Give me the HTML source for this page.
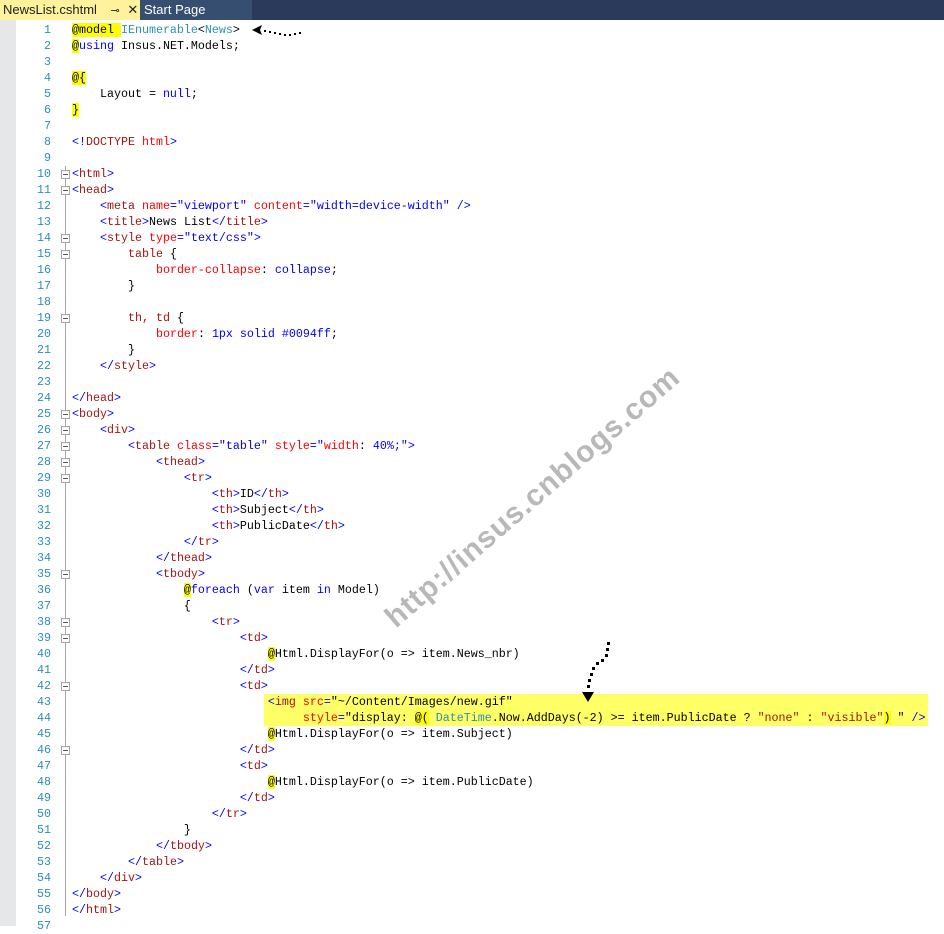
<!DOCTYPE html>
<html><head><meta charset="utf-8"><style>
body{margin:0;width:944px;height:926px;background:#fff;position:relative;overflow:hidden;font-family:"Liberation Mono",monospace}
.tabs{position:absolute;left:0;top:0;width:944px;height:20px;background:#2b3a5a}
.t1{position:absolute;left:0;top:0;width:140px;height:20px;background:#fff29d;font:13px "Liberation Sans",sans-serif;color:#1e1e1e;line-height:20px;padding-left:3px;box-sizing:border-box}
.t2{position:absolute;left:140px;top:0;width:112px;height:20px;background:#364e6f;font:13px "Liberation Sans",sans-serif;color:#fff;line-height:20px;padding-left:4px;box-sizing:border-box}
.gut{position:absolute;left:0;top:20px;width:16px;height:906px;background:#e6e7e8}
.ln{position:absolute;left:16px;width:35px;text-align:right;color:#2b91af;font-size:11.67px;line-height:16px}
.c{position:absolute;left:72px;white-space:pre;font-size:11.67px;line-height:16px;color:#000}
.hl{position:absolute;left:264px;top:694px;width:664px;height:32px;background:#ffff66}
.vl{position:absolute;left:65px;top:166px;width:1px;height:750px;background:#a5a5a5}
.fb{position:absolute;left:61px;width:7px;height:7px;border:1px solid #a5a5a5;background:#fff}
.fb:after{content:"";position:absolute;left:1px;top:3px;width:5px;height:1px;background:#555}
.b{color:#0000ff}.m{color:#a31515}.r{color:#ff0000}.y{background:#ffff00}.k{color:#0000ff}.tp{color:#2b91af}.s{color:#a31515}
.wm{position:absolute;left:390px;top:605px;font:bold 30px "Liberation Sans",sans-serif;color:#b8b8b8;transform:rotate(-41deg);transform-origin:left center;white-space:nowrap;letter-spacing:1px}
</style></head><body>
<div class="tabs"><div class="t1">NewsList.cshtml <span style="margin-left:10px;font-size:11px">⊸</span> <span style="margin-left:4px">✕</span></div><div class="t2">Start Page</div></div>
<div class="gut"></div>
<div class="hl"></div>
<div class="vl"></div>
<div id="ln"></div>
<div id="code"></div>
<div class="wm">http://insus.cnblogs.com</div>
<svg style="position:absolute;left:250px;top:22px" width="60" height="20"><polygon points="2,8 12,3 10,8 12,13" fill="#000"/><g fill="#000"><rect x="14" y="8" width="2" height="2"/><rect x="19" y="9" width="2" height="2"/><rect x="24" y="10" width="2" height="2"/><rect x="29" y="11" width="2" height="2"/><rect x="34" y="12" width="2" height="2"/><rect x="39" y="12" width="2" height="2"/><rect x="44" y="11" width="2" height="2"/><rect x="49" y="10" width="2" height="2"/></g></svg>
<svg style="position:absolute;left:578px;top:640px" width="40" height="64"><g fill="#000"><rect x="29" y="2" width="3" height="3"/><rect x="28" y="8" width="3" height="3"/><rect x="27" y="14" width="3" height="3"/><rect x="23" y="19" width="3" height="3"/><rect x="18" y="22" width="3" height="3"/><rect x="14" y="27" width="3" height="3"/><rect x="12" y="33" width="3" height="3"/><rect x="10" y="39" width="3" height="3"/><rect x="9" y="45" width="3" height="3"/></g><polygon points="4,52 16,52 10,62" fill="#000"/></svg>
<script>
const L=[
'<span class="y">@model </span><span class="tp">IEnumerable</span>&lt;<span class="tp">News</span>&gt;',
'<span class="y">@</span><span class="k">using</span> Insus.NET.Models;',
'',
'<span class="y">@{</span>',
'    Layout = <span class="k">null</span>;',
'<span class="y">}</span>',
'',
'<span class="b">&lt;!</span><span class="m">DOCTYPE</span> <span class="r">html</span><span class="b">&gt;</span>',
'',
'T<html>',
'T<head>',
'    <span class="b">&lt;</span><span class="m">meta</span> <span class="r">name</span><span class="b">="viewport"</span> <span class="r">content</span><span class="b">="width=device-width"</span> <span class="b">/&gt;</span>',
'    <span class="b">&lt;</span><span class="m">title</span><span class="b">&gt;</span>News List<span class="b">&lt;/</span><span class="m">title</span><span class="b">&gt;</span>',
'    <span class="b">&lt;</span><span class="m">style</span> <span class="r">type</span><span class="b">="text/css"</span><span class="b">&gt;</span>',
'        <span class="m">table</span> {',
'            <span class="r">border-collapse</span>: <span class="b">collapse</span>;',
'        }',
'',
'        <span class="m">th, td</span> {',
'            <span class="r">border</span>: <span class="b">1px solid #0094ff</span>;',
'        }',
'    T</style>',
'',
'T</head>',
'T<body>',
'    T<div>',
'        <span class="b">&lt;</span><span class="m">table</span> <span class="r">class</span><span class="b">="table"</span> <span class="r">style</span><span class="b">="</span><span class="r">width</span>: <span class="b">40%;"&gt;</span>',
'            T<thead>',
'                T<tr>',
'                    T<th>IDT</th>',
'                    T<th>SubjectT</th>',
'                    T<th>PublicDateT</th>',
'                T</tr>',
'            T</thead>',
'            T<tbody>',
'                <span class="y">@</span><span class="k">foreach</span> (<span class="k">var</span> item <span class="k">in</span> Model)',
'                {',
'                    T<tr>',
'                        T<td>',
'                            <span class="y">@</span>Html.DisplayFor(o =&gt; item.News_nbr)',
'                        T</td>',
'                        T<td>',
'                            <span class="b">&lt;</span><span class="m">img</span> <span class="r">src</span><span class="b">=</span>"~/Content/Images/new.gif"',
'                                 <span class="r">style</span><span class="b">=</span>"display: <span class="y">@(</span> <span class="tp">DateTime</span>.Now.AddDays(-2) &gt;= item.PublicDate ? <span class="s">"none"</span> : <span class="s">"visible"</span><span class="y">)</span> " <span class="b">/&gt;</span>',
'                            <span class="y">@</span>Html.DisplayFor(o =&gt; item.Subject)',
'                        T</td>',
'                        T<td>',
'                            <span class="y">@</span>Html.DisplayFor(o =&gt; item.PublicDate)',
'                        T</td>',
'                    T</tr>',
'                }',
'            T</tbody>',
'        T</table>',
'    T</div>',
'T</body>',
'T</html>'];
const folds=[10,11,14,15,19,25,26,27,28,29,35,38,39,42,46];
let h='',n='';
function tag(s){return s.replace(/T<(\/?)([a-z]+)>/g,(m,sl,t)=>'<span class="b">&lt;'+sl+'</span><span class="m">'+t+'</span><span class="b">&gt;</span>');}
L.forEach((l,i)=>{const top=22+i*16;
h+='<div class="c" style="top:'+top+'px">'+tag(l)+'</div>';
n+='<div class="ln" style="top:'+top+'px">'+(i+1)+'</div>';
if(folds.includes(i+1))n+='<div class="fb" style="top:'+(top+4)+'px"></div>';});
n+='<div class="ln" style="top:918px">57</div>';
document.getElementById('code').innerHTML=h;document.getElementById('ln').innerHTML=n;
</script>
</body></html>
